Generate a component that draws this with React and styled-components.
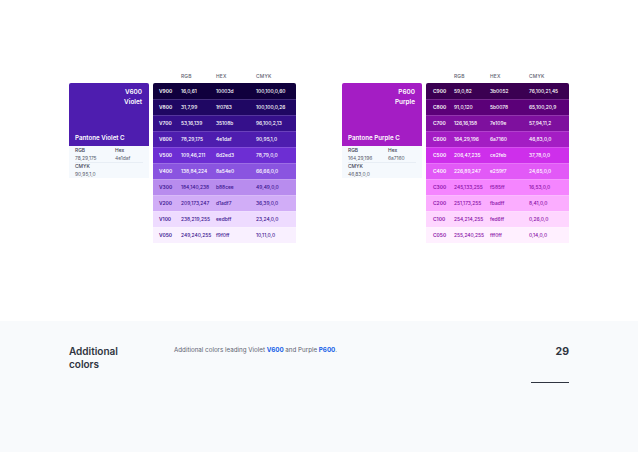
import React from 'react';
import styled, { createGlobalStyle } from 'styled-components';

const GlobalStyle = createGlobalStyle`
  html, body {
    margin: 0;
    padding: 0;
    background: #fff;
  }
  body {
    font-family: Inter, "Liberation Sans", sans-serif;
  }
`
const Page = styled.div`
  width: 638px;
  height: 452px;
  display: flex;
  flex-direction: column;
  overflow: hidden;
`
const Palettes = styled.div`
  height: 321px;
  box-sizing: border-box;
  padding: 70px 0 0 69px;
  display: flex;
  gap: 46px;
`
const Palette = styled.section`
  display: grid;
  grid-template-columns: 80px 143px;
  grid-template-rows: 13px auto;
  column-gap: 4px;
  align-items: start;
`
const Card = styled.div`
  grid-row: 2;
  grid-column: 1;
`
const Swatch = styled.div`
  height: 63px;
  box-sizing: border-box;
  padding: 4px 7px 4px 6px;
  display: flex;
  flex-direction: column;
  border-radius: 2px 2px 0 0;
  background: ${(p) => p.$color};
  color: #fff;
  font-size: 6.4px;
  font-weight: 600;
`
const SwatchName = styled.div`
  text-align: right;
  line-height: 9.5px;
  padding-top: 0.5px;
`
const Pantone = styled.div`
  margin-top: auto;
  font-size: 6.2px;
  line-height: 9px;
`
const Info = styled.div`
  background: #f5f9fd;
  padding: 0 6px;
  color: #55596b;
  font-size: 4.9px;
  line-height: 8px;
`
const InfoRow = styled.div`
  display: grid;
  grid-template-columns: 40px 1fr;
  & + & {
    box-shadow: inset 0 1px 0 #e8eef5;
  }
`
const InfoLabel = styled.div`
  font-weight: 500;
  color: #3d4152;
`
const TableHead = styled.div`
  grid-row: 1;
  grid-column: 2;
  display: grid;
  grid-template-columns: ${(p) => p.$columns};
  padding-left: ${(p) => p.$inset}px;
  color: #5d6170;
  font-size: 4.9px;
  font-weight: 500;
  line-height: 13px;
  letter-spacing: 0.2px;
`
const Table = styled.div`
  grid-row: 2;
  grid-column: 2;
  border-radius: 2px 2px 0 0;
  overflow: hidden;
`
const Row = styled.div`
  height: 16px;
  box-sizing: border-box;
  display: grid;
  grid-template-columns: ${(p) => p.$columns};
  align-items: center;
  padding-left: ${(p) => p.$inset}px;
  background: ${(p) => p.$color};
  color: ${(p) => p.$text};
  font-size: 4.9px;
  font-weight: 500;
  box-shadow: ${(p) => (p.$first ? 'none' : 'inset 0 1px 0 rgba(255, 255, 255, 0.16)')};
`
const Shade = styled.div`
  font-weight: 600;
`
const Footer = styled.footer`
  flex: 1;
  background: #f8fafc;
  box-sizing: border-box;
  padding: 24px 69px 0;
  display: flex;
  align-items: flex-start;
`
const FooterTitle = styled.h2`
  width: 105px;
  box-sizing: border-box;
  padding-right: 50px;
  margin: 0;
  color: #2f3440;
  font-size: 10px;
  font-weight: 600;
  line-height: 13px;
`
const FooterText = styled.p`
  flex: 1;
  margin: 0;
  color: #5c6170;
  font-size: 6.23px;
  font-weight: 400;
  line-height: 10px;
`
const ColorLink = styled.strong`
  color: #1560e8;
  font-weight: 700;
`
const PageMark = styled.div`
  width: 38px;
  display: flex;
  flex-direction: column;
  align-items: flex-end;
  color: #2f3440;
  font-size: 10.5px;
  font-weight: 700;
  line-height: 13px;
`
const PageRule = styled.div`
  width: 100%;
  height: 1px;
  margin-top: 24px;
  background: #2f3440;
`

const violet = {
  shade: 'V600',
  name: 'Violet',
  pantone: 'Pantone Violet C',
  color: '#4e1daf',
  rgb: '78,29,175',
  rgbLabel: 'Hex',
  hex: '4e1daf',
  cmyk: '90,95,1,0',
  inset: 6,
  columns: '22px 35px 40px 1fr',
  rows: [
    ['V900', '16,0,61', '10003d', '100,100,0,60', '#10003d', '#fff'],
    ['V800', '31,7,99', '1f0763', '100,100,0,26', '#1f0763', '#fff'],
    ['V700', '53,16,139', '35108b', '96,100,2,13', '#35108b', '#fff'],
    ['V600', '78,29,175', '4e1daf', '90,95,1,0', '#4e1daf', '#fff'],
    ['V500', '109,46,211', '6d2ed3', '78,79,0,0', '#6d2ed3', '#fff'],
    ['V400', '138,84,224', '8a54e0', '66,66,0,0', '#8a54e0', '#fff'],
    ['V300', '184,140,238', 'b88cee', '49,49,0,0', '#b88cee', '#3b1590'],
    ['V200', '209,173,247', 'd1adf7', '36,39,0,0', '#d1adf7', '#3b1590'],
    ['V100', '238,219,255', 'eedbff', '23,24,0,0', '#eedbff', '#3b1590'],
    ['V050', '249,240,255', 'f9f0ff', '10,11,0,0', '#f9f0ff', '#3b1590'],
  ],
}

const purple = {
  shade: 'P600',
  name: 'Purple',
  pantone: 'Pantone Purple C',
  color: '#a41dc4',
  rgb: '164,29,196',
  rgbLabel: 'Hex',
  hex: '6a7160',
  cmyk: '46,83,0,0',
  inset: 7,
  columns: '21px 36px 39px 1fr',
  rows: [
    ['C900', '59,0,82', '3b0052', '76,100,21,45', '#3b0052', '#fff'],
    ['C800', '91,0,120', '5b0078', '65,100,20,9', '#5b0078', '#fff'],
    ['C700', '126,16,158', '7e109e', '57,94,11,2', '#7e109e', '#fff'],
    ['C600', '164,29,196', '6a7160', '46,83,0,0', '#a41dc4', '#fff'],
    ['C500', '206,47,235', 'ce2feb', '37,78,0,0', '#ce2feb', '#fff'],
    ['C400', '226,89,247', 'e259f7', '24,65,0,0', '#e259f7', '#fff'],
    ['C300', '245,133,255', 'f585ff', '16,53,0,0', '#f585ff', '#8a12a8'],
    ['C200', '251,173,255', 'fbadff', '8,41,0,0', '#fbadff', '#8a12a8'],
    ['C100', '254,214,255', 'fed6ff', '0,26,0,0', '#fed6ff', '#8a12a8'],
    ['C050', '255,240,255', 'fff0ff', '0,14,0,0', '#fff0ff', '#8a12a8'],
  ],
}

function PaletteBlock({ data }) {
  return (
    <Palette>
      <TableHead $columns={data.columns} $inset={data.inset}>
        <div />
        <div>RGB</div>
        <div>HEX</div>
        <div>CMYK</div>
      </TableHead>
      <Card>
        <Swatch $color={data.color}>
          <SwatchName>{data.shade}</SwatchName>
          <SwatchName>{data.name}</SwatchName>
          <Pantone>{data.pantone}</Pantone>
        </Swatch>
        <Info>
          <InfoRow>
            <div>
              <InfoLabel>RGB</InfoLabel>
              {data.rgb}
            </div>
            <div>
              <InfoLabel>{data.rgbLabel}</InfoLabel>
              {data.hex}
            </div>
          </InfoRow>
          <InfoRow>
            <div>
              <InfoLabel>CMYK</InfoLabel>
              {data.cmyk}
            </div>
          </InfoRow>
        </Info>
      </Card>
      <Table>
        {data.rows.map((row, index) => (
          <Row
            key={row[0]}
            $first={index === 0}
            $columns={data.columns}
            $inset={data.inset}
            $color={row[4]}
            $text={row[5]}
          >
            <Shade>{row[0]}</Shade>
            <div>{row[1]}</div>
            <div>{row[2]}</div>
            <div>{row[3]}</div>
          </Row>
        ))}
      </Table>
    </Palette>
  );
}

function App() {
  return (
    <Page>
      <GlobalStyle />
      <Palettes>
        <PaletteBlock data={violet} />
        <PaletteBlock data={purple} />
      </Palettes>
      <Footer>
        <FooterTitle>Additional colors</FooterTitle>
        <FooterText>
          Additional colors leading Violet <ColorLink>V600</ColorLink> and Purple <ColorLink>P600</ColorLink>.
        </FooterText>
        <PageMark>
          29
          <PageRule />
        </PageMark>
      </Footer>
    </Page>
  );
}

export default App;
